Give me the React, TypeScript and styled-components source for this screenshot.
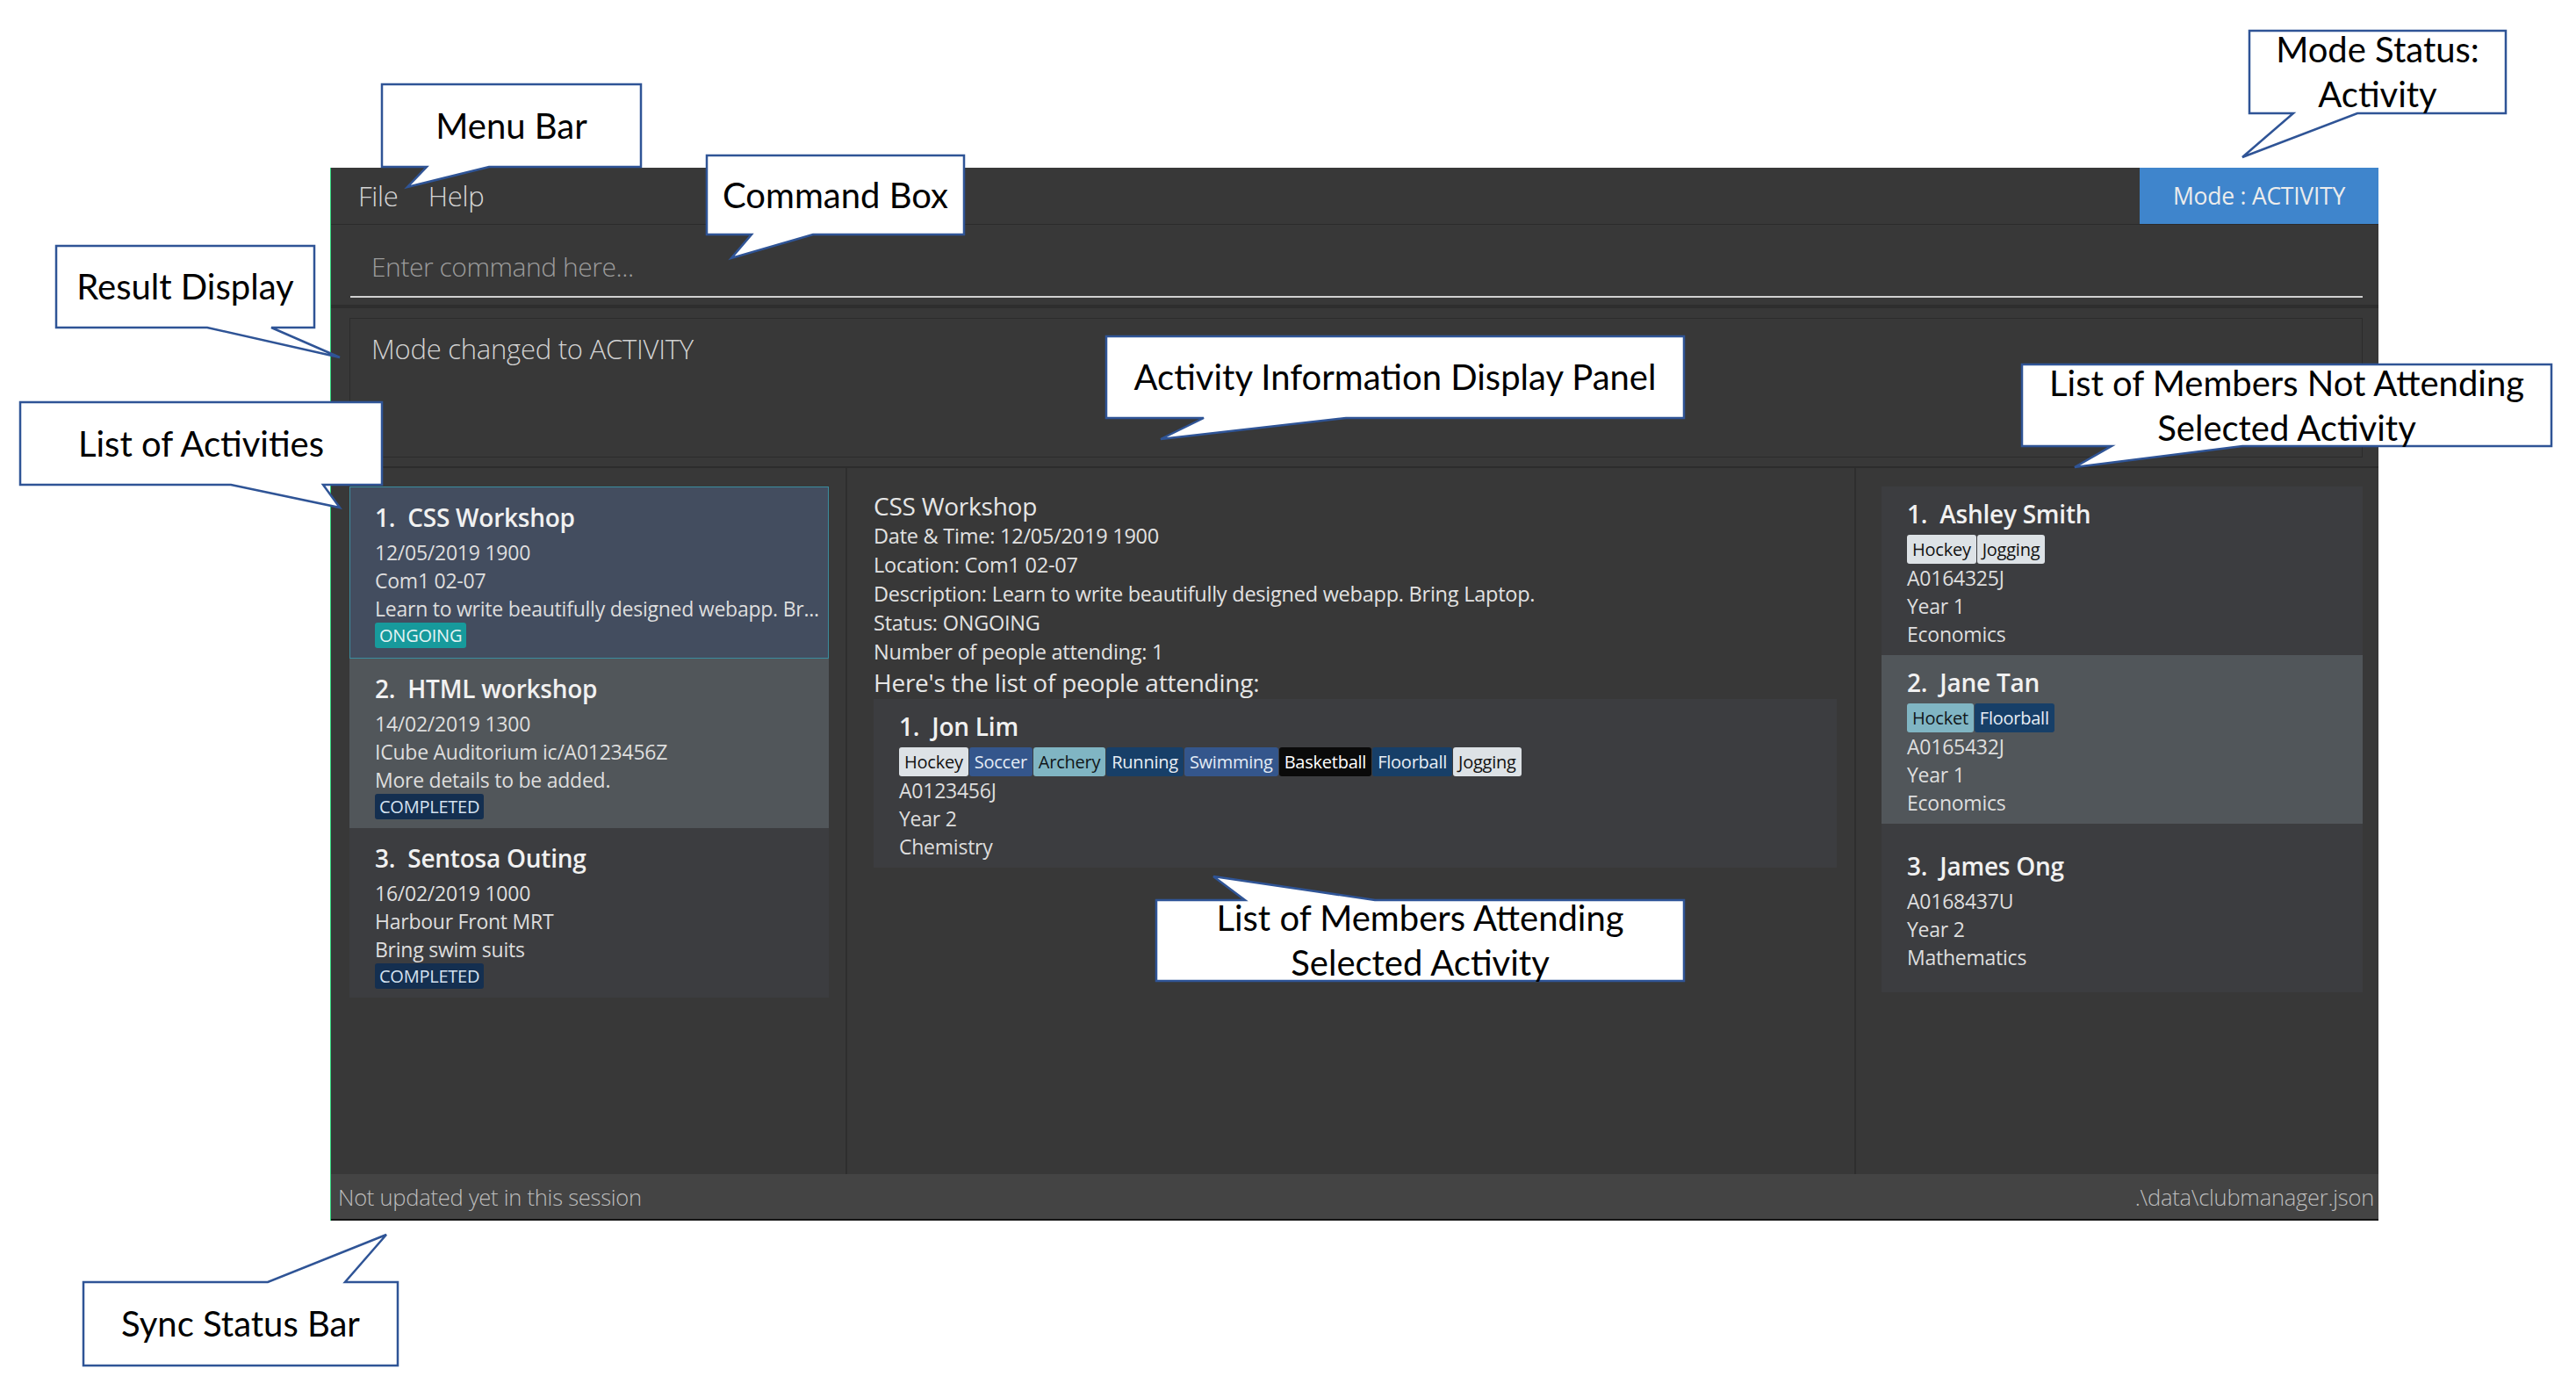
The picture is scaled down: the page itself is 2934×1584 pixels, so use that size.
import React from 'react';
import styled, { createGlobalStyle } from 'styled-components';

const GlobalStyle = createGlobalStyle`
  html, body { margin: 0; padding: 0; background: #ffffff; }
  *, *::before, *::after { box-sizing: border-box; }
`;

const UI_FONT = `"Open Sans", "Noto Sans", "DejaVu Sans", sans-serif`;
const NOTE_FONT = `Lato, "Open Sans", "Noto Sans", sans-serif`;

/* ---------- page & window ---------- */

const Page = styled.div`
  position: relative;
  width: 2934px;
  height: 1584px;
  overflow: hidden;
  background: #ffffff;
  padding: 191px 0 0 376px;
`;

const Window = styled.div`
  width: 2333px;
  height: 1199px;
  display: flex;
  flex-direction: column;
  background: #383838;
  border-left: 1px solid #2fd27a;
  font-family: ${UI_FONT};
  letter-spacing: -0.015em;
  color: #e6e6e6;
`;

const MenuBar = styled.div`
  height: 65px;
  flex: none;
  display: flex;
  align-items: stretch;
  padding-left: 31px;
  border-bottom: 1px solid #2b2b2b;
`;

const MenuItem = styled.span`
  display: flex;
  align-items: center;
  margin-right: 34px;
  font-size: 31px;
  font-weight: 300;
  color: #d6d6d6;
`;

const ModeBadge = styled.div`
  margin-left: auto;
  width: 272px;
  display: flex;
  align-items: center;
  justify-content: center;
  background: #3f85cc;
  font-size: 26.5px;
  color: #ececec;
`;

const CommandSection = styled.div`
  flex: none;
  height: 91px;
  padding: 27px 18px 8px 22px;
`;

const CommandInput = styled.input`
  display: block;
  width: 100%;
  height: 56px;
  margin: 0;
  padding: 0 0 14px 24px;
  background: transparent;
  border: none;
  border-bottom: 2px solid #d0d0d0;
  outline: none;
  font-family: ${UI_FONT};
  letter-spacing: -0.015em;
  font-size: 30px;
  font-weight: 300;
  color: #e0e0e0;
  &::placeholder { color: #9c9c9c; opacity: 1; }
`;

const ResultSection = styled.div`
  flex: none;
  height: 184px;
  padding: 11px 18px 10px 21px;
  border-top: 4px solid #2e2e2e;
`;

const ResultBox = styled.div`
  height: 159px;
  padding: 14px 24px;
  border: 1px solid #2c2c2c;
  font-size: 31px;
  font-weight: 300;
  line-height: 40px;
  color: #d2d2d2;
`;

const Main = styled.div`
  flex: 1;
  display: flex;
  min-height: 0;
  border-top: 2px solid #2c2c2c;
`;

const Panel = styled.div<{ $width?: number; $pad: string; $divider?: boolean }>`
  ${(p) => (p.$width ? `width: ${p.$width}px; flex: none;` : 'flex: 1;')}
  padding: ${(p) => p.$pad};
  border-right: ${(p) => (p.$divider ? '2px solid #2e2e2e' : 'none')};
  display: flex;
  flex-direction: column;
  overflow: hidden;
`;

const StatusBar = styled.div`
  flex: none;
  height: 53px;
  display: flex;
  align-items: center;
  justify-content: space-between;
  padding: 0 5px 0 8px;
  background: #444444;
  border-bottom: 2px solid #161616;
  font-size: 25.5px;
  font-weight: 300;
  color: #bdbdbd;
`;

/* ---------- cards ---------- */

type Variant = 'selected' | 'alt' | 'plain';

const cardBg: Record<Variant, string> = {
  selected: '#434d5f',
  alt: '#51565a',
  plain: '#3c3d40',
};

const Card = styled.div<{ $variant: Variant; $height: number }>`
  flex: none;
  height: ${(p) => p.$height}px;
  display: flex;
  flex-direction: column;
  justify-content: center;
  padding: 5px 6px 0 ${(p) => (p.$variant === 'selected' ? 28 : 29)}px;
  background: ${(p) => cardBg[p.$variant]};
  border: ${(p) => (p.$variant === 'selected' ? '1px solid #3a8c9e' : 'none')};
  overflow: hidden;
`;

const CardTitle = styled.div`
  font-size: 28px;
  font-weight: 600;
  line-height: 36px;
  color: #f1f1f1;
  white-space: pre;
  margin-bottom: 6px;
`;

const CardLine = styled.div`
  font-size: 23px;
  line-height: 32px;
  color: #dedede;
  white-space: nowrap;
`;

const StatusBadge = styled.span<{ $status: string }>`
  align-self: flex-start;
  height: 29px;
  display: inline-flex;
  align-items: center;
  padding: 0 5px;
  border-radius: 3px;
  font-size: 20px;
  background: ${(p) => (p.$status === 'ONGOING' ? '#179a9c' : '#142f50')};
  color: ${(p) => (p.$status === 'ONGOING' ? '#e4f4f4' : '#d5e2f0')};
`;

const TagRow = styled.div`
  display: flex;
  gap: 1px;
  height: 33px;
`;

type TagKind = 'light' | 'steel' | 'teal' | 'navy' | 'black';
const tagColors: Record<TagKind, [string, string]> = {
  light: ['#dde2e6', '#111111'],
  steel: ['#34568c', '#e4ecf5'],
  teal: ['#80b5c3', '#10161a'],
  navy: ['#173f68', '#e8eef5'],
  black: ['#0a0a0a', '#ffffff'],
};

const Tag = styled.span<{ $kind: TagKind }>`
  display: inline-flex;
  align-items: center;
  padding: 0 6px;
  border-radius: 3px;
  font-size: 20px;
  font-weight: 500;
  background: ${(p) => tagColors[p.$kind][0]};
  color: ${(p) => tagColors[p.$kind][1]};
`;

/* ---------- activity info ---------- */

const InfoTitle = styled.div`
  font-size: 28px;
  line-height: 36px;
  color: #e6e6e6;
`;

const InfoLine = styled.div`
  font-size: 23.5px;
  line-height: 33px;
  color: #e2e2e2;
`;

const InfoHeading = styled.div`
  font-size: 28px;
  line-height: 36px;
  color: #e6e6e6;
  margin-bottom: 1px;
`;

/* ---------- callouts ---------- */

const CalloutWrap = styled.div<{ $l: number; $t: number; $w: number; $h: number }>`
  position: absolute;
  left: ${(p) => p.$l}px;
  top: ${(p) => p.$t}px;
  width: ${(p) => p.$w}px;
  height: ${(p) => p.$h}px;
  z-index: 10;
`;

const CalloutShape = styled.svg`
  position: absolute;
  left: 0;
  top: 0;
  overflow: visible;
`;

const CalloutText = styled.div<{ $l: number; $t: number; $w: number; $h: number }>`
  position: absolute;
  left: ${(p) => p.$l}px;
  top: ${(p) => p.$t}px;
  width: ${(p) => p.$w}px;
  height: ${(p) => p.$h}px;
  display: flex;
  flex-direction: column;
  align-items: center;
  justify-content: center;
  font-family: ${NOTE_FONT};
  font-size: 40px;
  line-height: 51px;
  color: #000000;
  white-space: nowrap;
  text-align: center;
`;

interface CalloutSpec {
  x: number;
  y: number;
  w: number;
  h: number;
  side: 'top' | 'bottom';
  b1: number;
  b2: number;
  tip: [number, number];
  lines: string[];
}

const callouts: CalloutSpec[] = [
  { x: 435, y: 96, w: 295, h: 94, side: 'bottom', b1: 486, b2: 557, tip: [464, 213], lines: ['Menu Bar'] },
  { x: 805, y: 177, w: 293, h: 90, side: 'bottom', b1: 856, b2: 926, tip: [833, 294], lines: ['Command Box'] },
  { x: 64, y: 280, w: 294, h: 93, side: 'bottom', b1: 236, b2: 309, tip: [387, 407], lines: ['Result Display'] },
  { x: 23, y: 458, w: 412, h: 94, side: 'bottom', b1: 263, b2: 368, tip: [387, 578], lines: ['List of Activities'] },
  { x: 1260, y: 383, w: 658, h: 93, side: 'bottom', b1: 1371, b2: 1533, tip: [1322, 500], lines: ['Activity Information Display Panel'] },
  { x: 2303, y: 415, w: 603, h: 93, side: 'bottom', b1: 2405, b2: 2554, tip: [2363, 532], lines: ['List of Members Not Attending', 'Selected Activity'] },
  { x: 2562, y: 35, w: 292, h: 94, side: 'bottom', b1: 2612, b2: 2685, tip: [2554, 179], lines: ['Mode Status:', 'Activity'] },
  { x: 1317, y: 1025, w: 601, h: 92, side: 'top', b1: 1418, b2: 1566, tip: [1382, 998], lines: ['List of Members Attending', 'Selected Activity'] },
  { x: 95, y: 1460, w: 358, h: 95, side: 'top', b1: 305, b2: 393, tip: [440, 1406], lines: ['Sync Status Bar'] },
];

const Callout: React.FC<{ spec: CalloutSpec }> = ({ spec }) => {
  const m = 4;
  const minX = Math.min(spec.x, spec.tip[0]) - m;
  const minY = Math.min(spec.y, spec.tip[1]) - m;
  const maxX = Math.max(spec.x + spec.w, spec.tip[0]) + m;
  const maxY = Math.max(spec.y + spec.h, spec.tip[1]) + m;
  const X = (v: number) => v - minX;
  const Y = (v: number) => v - minY;
  const l = X(spec.x);
  const r = X(spec.x + spec.w);
  const t = Y(spec.y);
  const b = Y(spec.y + spec.h);
  const tx = X(spec.tip[0]);
  const ty = Y(spec.tip[1]);
  const b1 = X(spec.b1);
  const b2 = X(spec.b2);
  const d =
    spec.side === 'bottom'
      ? `M${l},${t} H${r} V${b} H${b2} L${tx},${ty} L${b1},${b} H${l} Z`
      : `M${l},${t} H${b1} L${tx},${ty} L${b2},${t} H${r} V${b} H${l} Z`;
  return (
    <CalloutWrap $l={minX} $t={minY} $w={maxX - minX} $h={maxY - minY}>
      <CalloutShape width={maxX - minX} height={maxY - minY}>
        <path d={d} fill="#ffffff" stroke="#2f5496" strokeWidth={2.5} strokeLinejoin="miter" />
      </CalloutShape>
      <CalloutText $l={l} $t={t} $w={spec.w} $h={spec.h}>
        {spec.lines.map((line) => (
          <span key={line}>{line}</span>
        ))}
      </CalloutText>
    </CalloutWrap>
  );
};

/* ---------- data ---------- */

const activities: { idx: number; name: string; lines: string[]; status: string; variant: Variant }[] = [
  {
    idx: 1,
    name: 'CSS Workshop',
    lines: ['12/05/2019 1900', 'Com1 02-07', 'Learn to write beautifully designed webapp. Br...'],
    status: 'ONGOING',
    variant: 'selected',
  },
  {
    idx: 2,
    name: 'HTML workshop',
    lines: ['14/02/2019 1300', 'ICube Auditorium ic/A0123456Z', 'More details to be added.'],
    status: 'COMPLETED',
    variant: 'alt',
  },
  {
    idx: 3,
    name: 'Sentosa Outing',
    lines: ['16/02/2019 1000', 'Harbour Front MRT', 'Bring swim suits'],
    status: 'COMPLETED',
    variant: 'plain',
  },
];

type Member = { idx: number; name: string; tags: [string, TagKind][]; lines: string[]; variant: Variant };

const attending: Member[] = [
  {
    idx: 1,
    name: 'Jon Lim',
    tags: [
      ['Hockey', 'light'],
      ['Soccer', 'steel'],
      ['Archery', 'teal'],
      ['Running', 'navy'],
      ['Swimming', 'steel'],
      ['Basketball', 'black'],
      ['Floorball', 'navy'],
      ['Jogging', 'light'],
    ],
    lines: ['A0123456J', 'Year 2', 'Chemistry'],
    variant: 'plain',
  },
];

const notAttending: Member[] = [
  {
    idx: 1,
    name: 'Ashley Smith',
    tags: [
      ['Hockey', 'light'],
      ['Jogging', 'light'],
    ],
    lines: ['A0164325J', 'Year 1', 'Economics'],
    variant: 'plain',
  },
  {
    idx: 2,
    name: 'Jane Tan',
    tags: [
      ['Hocket', 'teal'],
      ['Floorball', 'navy'],
    ],
    lines: ['A0165432J', 'Year 1', 'Economics'],
    variant: 'alt',
  },
  {
    idx: 3,
    name: 'James Ong',
    tags: [],
    lines: ['A0168437U', 'Year 2', 'Mathematics'],
    variant: 'plain',
  },
];

const MemberCard: React.FC<{ m: Member }> = ({ m }) => (
  <Card $variant={m.variant} $height={192}>
    <CardTitle>{`${m.idx}.  ${m.name}`}</CardTitle>
    {m.tags.length > 0 && (
      <TagRow>
        {m.tags.map(([label, kind]) => (
          <Tag key={label} $kind={kind}>
            {label}
          </Tag>
        ))}
      </TagRow>
    )}
    {m.lines.map((line) => (
      <CardLine key={line}>{line}</CardLine>
    ))}
  </Card>
);

export default function App() {
  return (
    <>
      <GlobalStyle />
      <Page>
        <Window>
          <MenuBar>
            <MenuItem>File</MenuItem>
            <MenuItem>Help</MenuItem>
            <ModeBadge>Mode : ACTIVITY</ModeBadge>
          </MenuBar>
          <CommandSection>
            <CommandInput placeholder="Enter command here..." readOnly />
          </CommandSection>
          <ResultSection>
            <ResultBox>Mode changed to ACTIVITY</ResultBox>
          </ResultSection>
          <Main>
            <Panel $width={588} $pad="21px 19px 0 21px" $divider>
              {activities.map((a) => (
                <Card key={a.idx} $variant={a.variant} $height={a.variant === 'selected' ? 196 : 193}>
                  <CardTitle>{`${a.idx}.  ${a.name}`}</CardTitle>
                  {a.lines.map((line) => (
                    <CardLine key={line}>{line}</CardLine>
                  ))}
                  <StatusBadge $status={a.status}>{a.status}</StatusBadge>
                </Card>
              ))}
            </Panel>
            <Panel $width={1149} $pad="25px 20px 0 30px" $divider>
              <InfoTitle>CSS Workshop</InfoTitle>
              <InfoLine>Date &amp; Time: 12/05/2019 1900</InfoLine>
              <InfoLine>Location: Com1 02-07</InfoLine>
              <InfoLine>Description: Learn to write beautifully designed webapp. Bring Laptop.</InfoLine>
              <InfoLine>Status: ONGOING</InfoLine>
              <InfoLine>Number of people attending: 1</InfoLine>
              <InfoHeading>Here's the list of people attending:</InfoHeading>
              {attending.map((m) => (
                <MemberCard key={m.idx} m={m} />
              ))}
            </Panel>
            <Panel $pad="21px 18px 0 29px">
              {notAttending.map((m) => (
                <MemberCard key={m.idx} m={m} />
              ))}
            </Panel>
          </Main>
          <StatusBar>
            <span>Not updated yet in this session</span>
            <span>.\data\clubmanager.json</span>
          </StatusBar>
        </Window>
        {callouts.map((c) => (
          <Callout key={c.lines.join(' ')} spec={c} />
        ))}
      </Page>
    </>
  );
}
